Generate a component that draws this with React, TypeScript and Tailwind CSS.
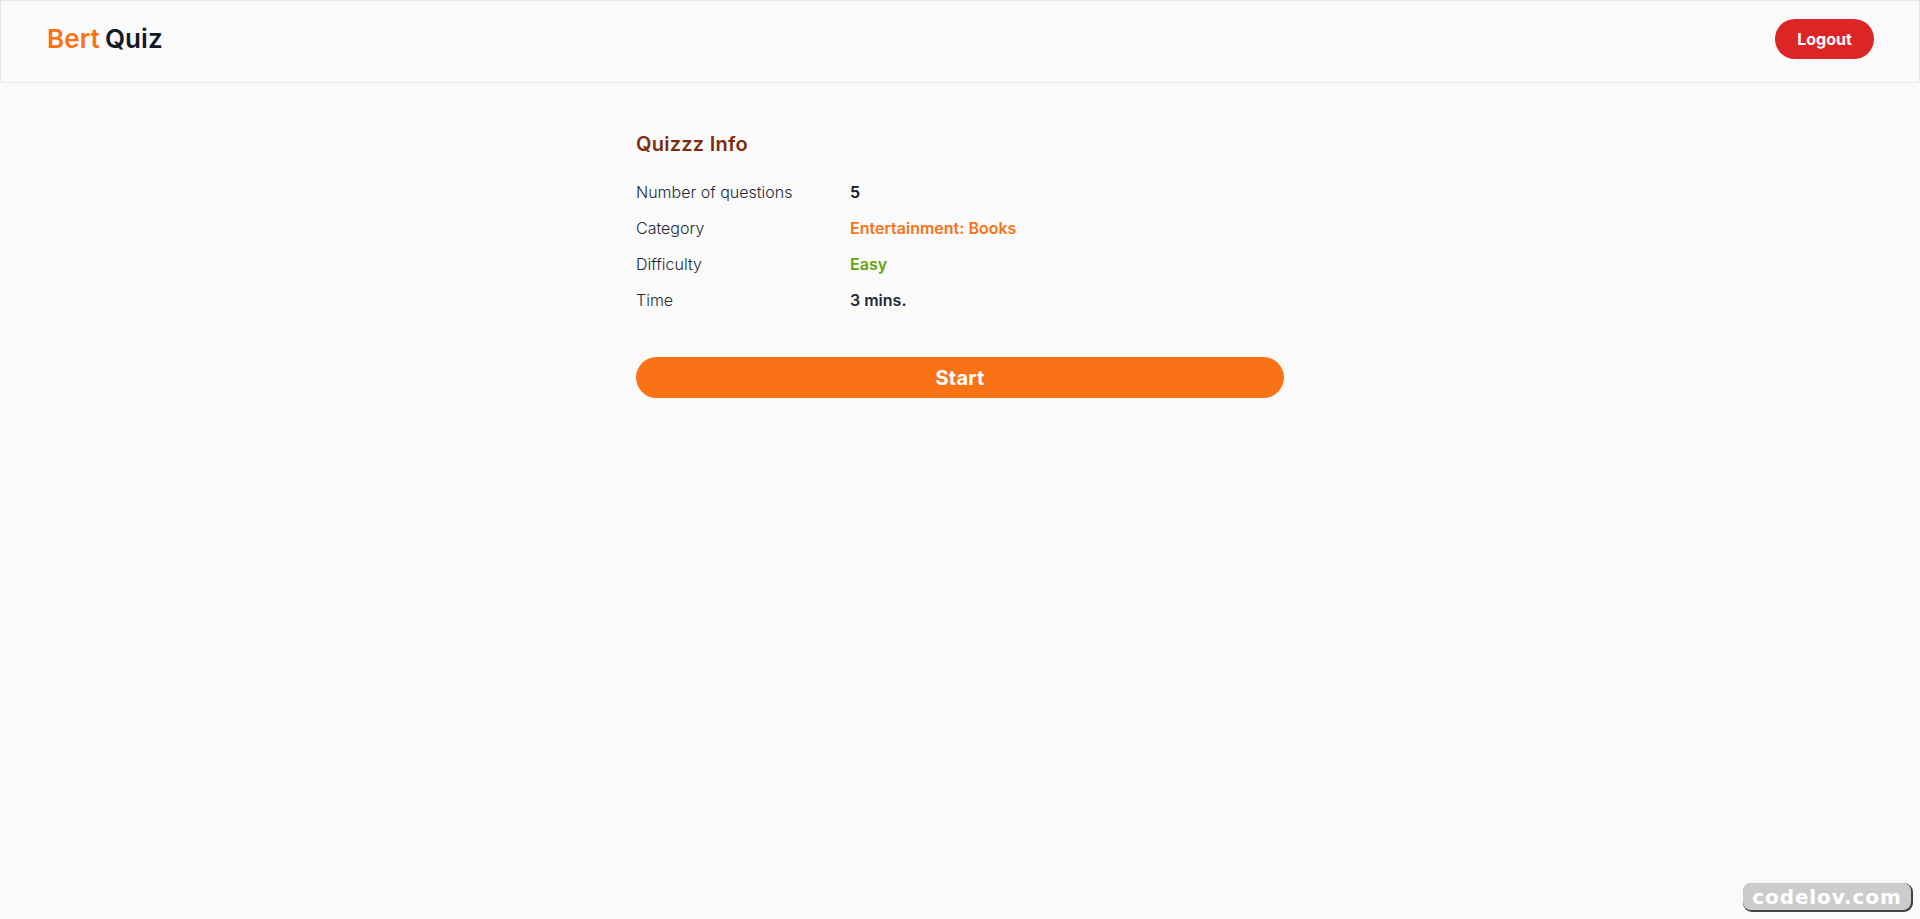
const infoRows = [
  { label: "Number of questions", value: "5", color: "text-[#111827]" },
  { label: "Category", value: "Entertainment: Books", color: "text-[#f97316]" },
  { label: "Difficulty", value: "Easy", color: "text-[#65a30d]" },
  { label: "Time", value: "3 mins.", color: "text-[#1f2937]" },
];

export default function App() {
  return (
    <div className="relative h-[919px] overflow-hidden bg-[#fafafa] font-['Inter',sans-serif]">
      {/* Header */}
      <header className="flex h-[83px] items-center justify-between border border-[#e5e7eb] pb-[6px] pl-[46px] pr-[45px]">
        <div className="flex gap-[5px] text-[26px] leading-8 font-semibold tracking-[0.1px]">
          <span className="text-[#f97316]">Bert</span>
          <span className="text-[#111827]">Quiz</span>
        </div>
        <button className="h-10 w-[99px] rounded-full bg-[#dc2626] text-base font-bold text-white">
          Logout
        </button>
      </header>

      {/* Info */}
      <main className="mx-auto w-[648px] pt-[47px]">
        <h2 className="text-xl font-semibold tracking-[0.25px] text-[#7c2d12]">Quizzz Info</h2>
        <div className="mt-4 flex flex-col">
          {infoRows.map((row) => (
            <div key={row.label} className="flex h-9 items-center text-base">
              <span className="w-[214px] font-light text-[#1f2937]">{row.label}</span>
              <span className={`font-semibold ${row.color}`}>{row.value}</span>
            </div>
          ))}
        </div>
        <button className="mt-[39px] h-[41px] w-full rounded-full bg-[#f97316] text-xl font-bold tracking-[0.2px] text-white">
          Start
        </button>
      </main>

      {/* Watermark */}
      <div className="absolute bottom-[9px] right-[9px] flex h-[27px] w-[168px] items-center justify-center rounded-lg bg-[#cccccc] font-['DejaVu_Sans',sans-serif] text-xl font-bold tracking-[0.9px] text-white shadow-[1px_1px_0_1px_#444]">
        codelov.com
      </div>
    </div>
  );
}
